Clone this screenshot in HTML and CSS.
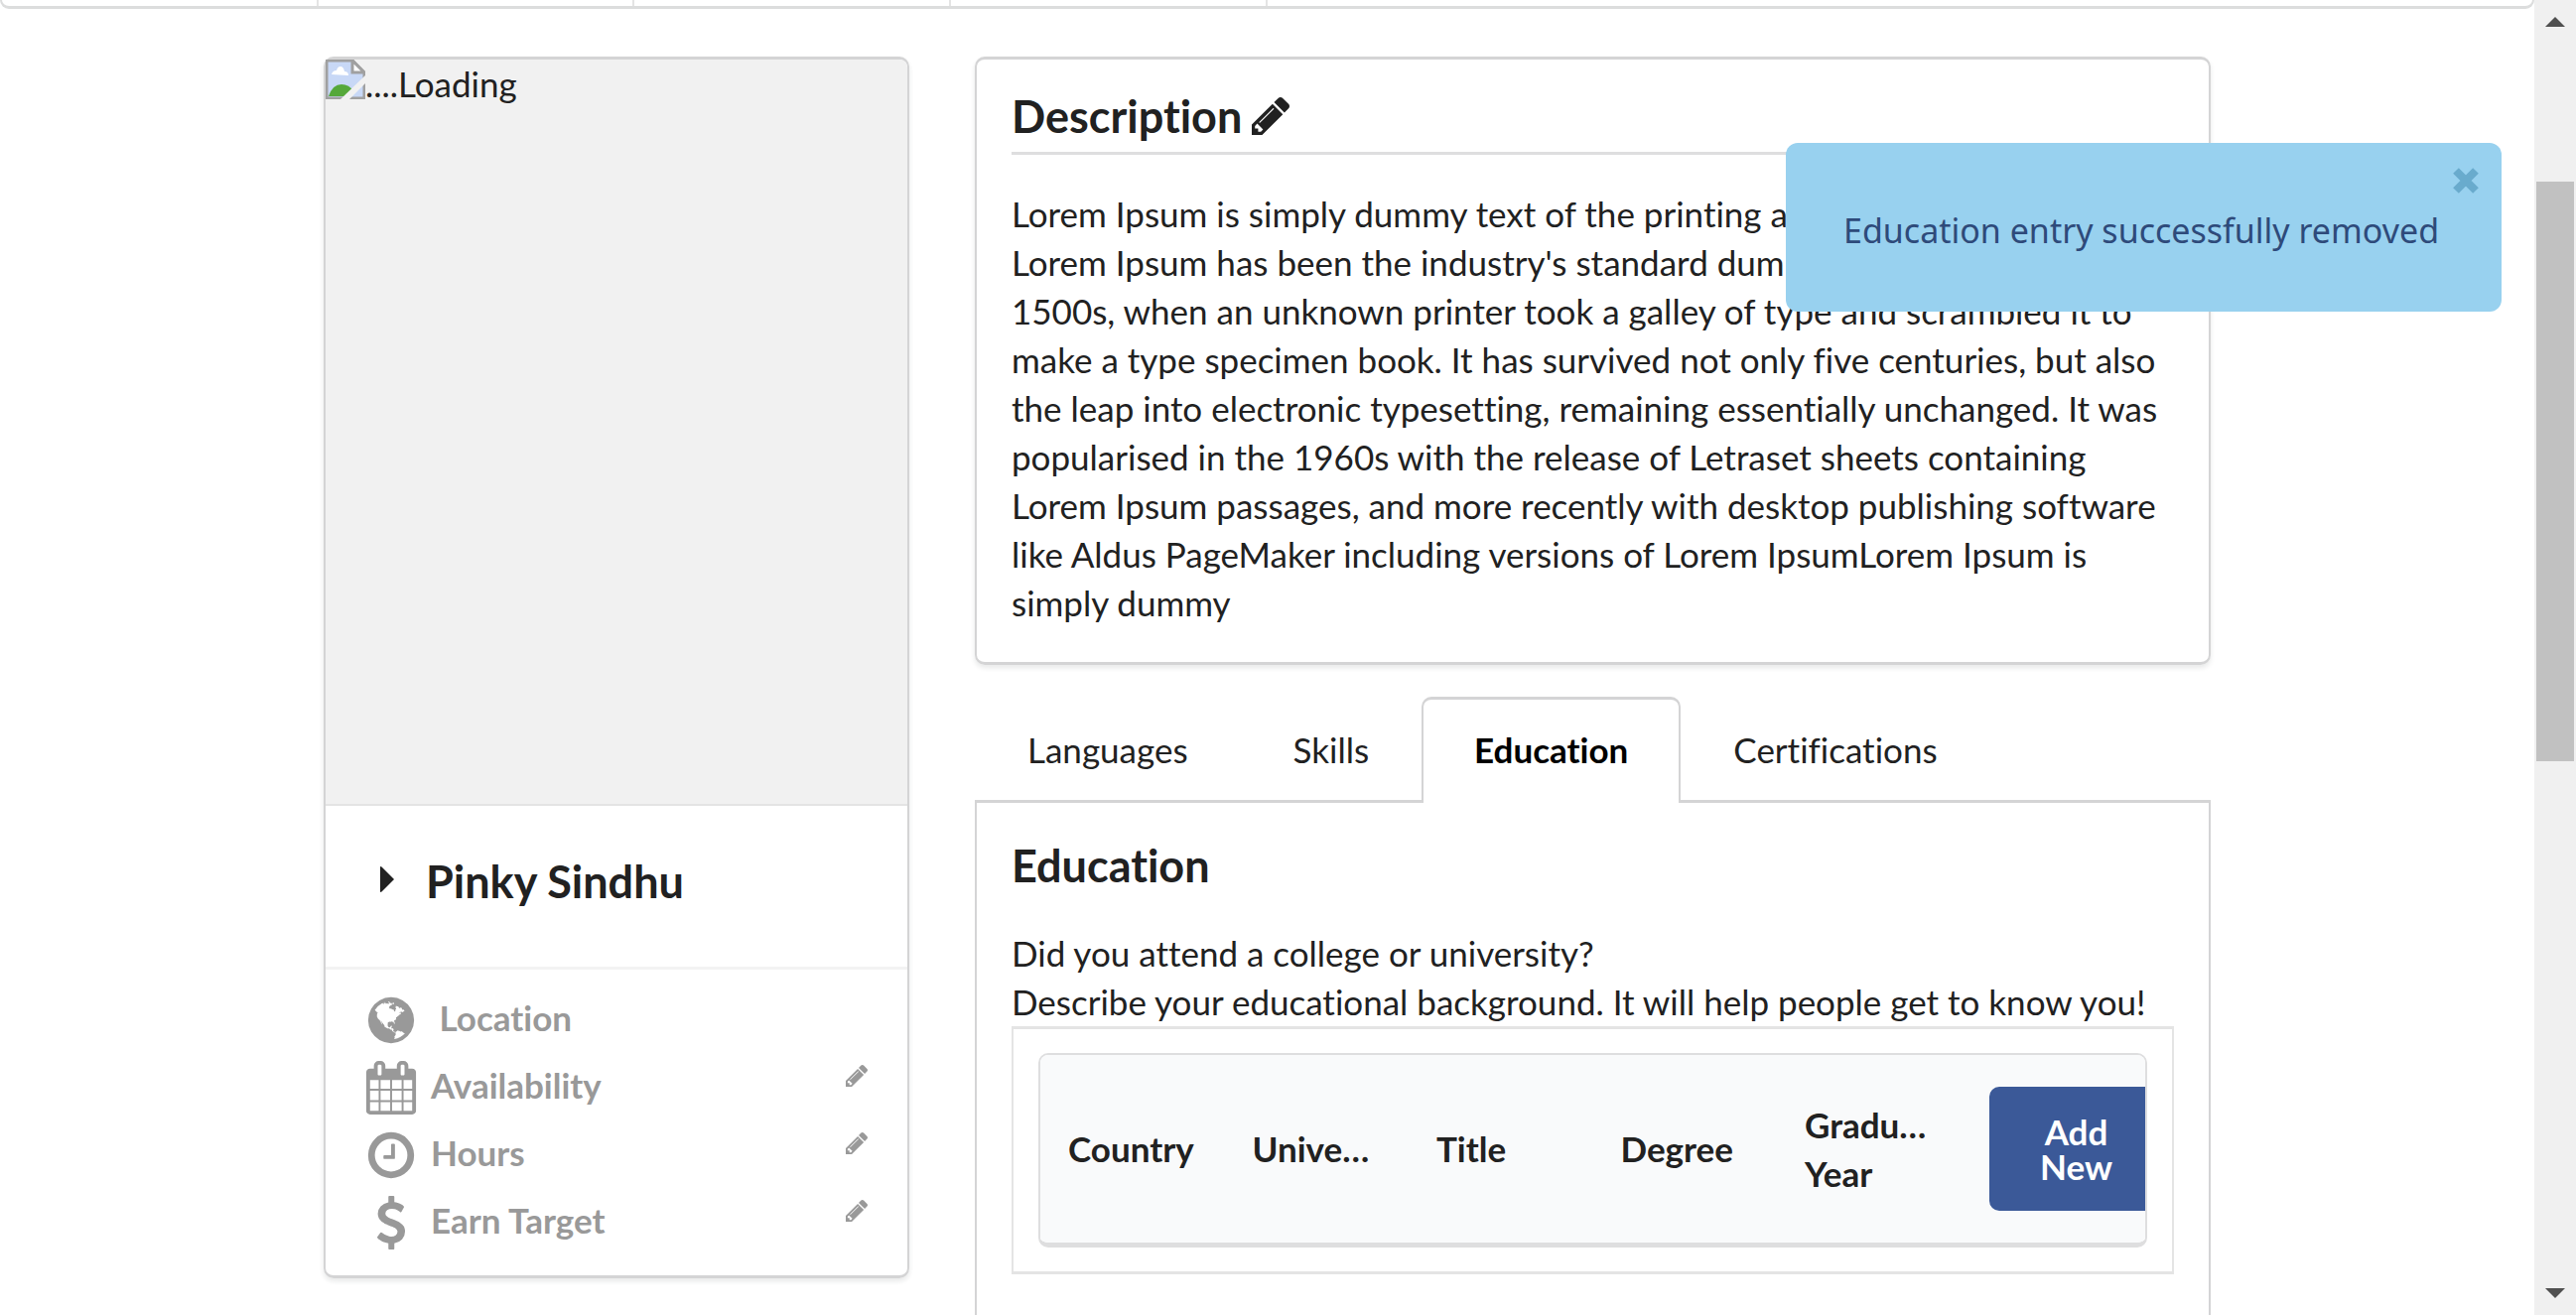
FILE: index.html
```html
<!DOCTYPE html>
<html lang="en">
<head>
<meta charset="utf-8">
<title>Profile</title>
<link rel="stylesheet" href="styles.css">
</head>
<body>
<svg class="defs" aria-hidden="true">
  <symbol id="pencil" viewBox="128 149 1515 1515"><path d="M491 1536l91-91-235-235-91 91v107h128v128h107zm523-928q0-22-22-22-10 0-17 7l-542 542q-7 7-7 17 0 22 22 22 10 0 17-7l542-542q7-7 7-17zm-54-192l416 416-832 832h-416v-416zm683 96q0 53-37 90l-166 166-416-416 166-165q36-38 90-38 53 0 91 38l235 234q37 39 37 91z"/></symbol>
</svg>
<div class="window">
  <div class="page">
    <nav class="topmenu" aria-label="Main"><span></span><span></span><span></span><span></span></nav>
    <main class="columns">
      <section class="card profile">
        <div class="photo">
          <svg class="broken" viewBox="0 0 40 40" aria-hidden="true">
            <path d="M1 1h26l12 12v26H1z" fill="#c8d8f6" stroke="#a0a0a0" stroke-width="3"/>
            <path d="M27 1v12h12z" fill="#fff" stroke="#a0a0a0" stroke-width="3"/>
            <path d="M6 15q1-4 5-4 1-4 4-4t4 5q4 0 4 4z" fill="#fff"/>
            <path d="M3 37q4-12 13-12 8 0 12 7l-6 5z" fill="#55a83a"/>
            <path d="M40 16v8L24 40h-9z" fill="#f1f1f1"/>
          </svg><span>....Loading</span>
        </div>
        <details class="name"><summary><svg class="caret" viewBox="0 0 14 26" aria-hidden="true"><path d="M0 1q0-2 2 0l12 12L2 25q-2 2-2 0z"/></svg>Pinky Sindhu</summary></details>
        <ul class="facts">
          <li>
            <svg viewBox="0 0 1792 1792" aria-hidden="true"><path transform="translate(128 0)" d="M768 128q209 0 385.5 103t279.5 279.5 103 385.5-103 385.5-279.5 279.5-385.5 103-385.5-103-279.5-279.5-103-385.5 103-385.5 279.5-279.5 385.5-103zm274 521q-2 1-9.5 9.5t-13.5 9.5q2 0 4.5-5t5-11 3.5-7q6-7 22-15 14-6 52-12 34-8 51 11-2-2 9.5-13t14.5-12q3-2 15-4.5t15-7.5l2-22q-12 1-17.5-7t-6.5-21q0 2-6 8 0-7-4.5-8t-11.5 1-9 1q-10-3-15-7.5t-8-16.5-4-15q-2-5-9.5-10.5t-9.5-10.5q-1-2-2.5-5.5t-3-6.5-4-5.5-5.5-2.5-7 5-7.5 10-4.5 5q-3-2-6-1.5t-4.5 1-4.5 3-5 3.5q-3 2-8.5 3t-8.5 2q15-5-1-11-10-4-16-3 9-4 7.5-12t-8.5-14h5q-1-4-8.5-8.5t-17.5-8.5-13-6q-8-5-34-9.5t-33-.5q-5 6-4.5 10.5t4 14 3.5 12.5q1 6-5.5 13t-6.5 12q0 7 14 15.5t10 21.5q-3 8-16 16t-16 12q-5 8-1.5 18.5t10.5 16.5q2 2 1.5 4t-3.5 4.5-5.5 4-6.5 3.5l-3 2q-11 5-20.5-6t-13.5-26q-7-25-16-30-23-8-29 1-5-13-41-26-25-9-58-4 6-1 0-15-7-15-19-12 3-6 4-17.5t1-13.5q3-13 12-23 1-1 7-8.5t9.5-13.5.5-6q35 4 50-11 5-5 11.5-17t10.5-17q9-6 14-5.5t14.5 5.5 14.5 5q14 1 15.5-11t-7.5-20q12 1 3-17-4-7-8-9-12-4-27 5-8 4 2 8-1-1-9.5 10.5t-16.5 17.5-16-5q-1-1-5.5-13.5t-9.5-13.5q-8 0-16 15 3-8-11-15t-24-8q19-12-8-27-7-4-20.5-5t-19.5 4q-5 7-5.5 11.5t5 8 10.5 5.5 11.5 4 8.5 3q14 10 8 14-2 1-8.5 3.5t-11.5 4.5-6 4q-3 4 0 14t-2 14q-5-5-9-17.5t-7-16.5q7 9-25 6l-10-1q-4 0-16 2t-20.5 1-13.5-8q-4-8 0-20 1-4 4-2-4-3-11-9.5t-10-8.5q-46 15-94 41 6 1 12-1 5-2 13-6.5t10-5.5q34-14 42-7l5-5q14 16 20 25-7-4-30-1-20 6-22 12 7 12 5 18-4-3-11.5-10t-14.5-11-15-5q-16 0-22 1-146 80-235 222 7 7 12 8 4 1 5 9t2.5 11 11.5-3q9 8 3 19 1-1 44 27 19 17 21 21 3 11-10 18-1-2-9-9t-9-4q-3 5 .5 18.5t10.5 12.5q-7 0-9.5 16t-2.5 35.5-1 23.5l2 1q-3 12 5.5 34.5t21.5 19.5q-13 3 20 43 6 8 8 9 3 2 12 7.5t15 10 10 10.5q4 5 10 22.5t14 23.5q-2 6 9.5 20t10.5 23q-1 0-2.5 1t-2.5 1q3 7 15.5 14t15.5 13q1 3 2 10t3 11 8 2q2-20-24-62-15-25-17-29-3-5-5.5-15.5t-4.5-14.5q2 0 6 1.5t8.5 3.5 7.5 4 2 3q-3 7 2 17.5t12 18.5 17 19 12 13q6 6 14 19.5t0 13.5q9 0 20 10.5t17 19.5q5 8 8 26t5 24q2 7 8.5 13.5t12.5 9.5l16 8 13 7q5 2 18.5 10.5t21.5 11.5q10 4 16 4t14.5-2.5 13.5-3.5q15-2 29 15t21 21q36 19 55 11-2 1 .5 7.5t8 15.5 9 14.5 5.5 8.5q5 6 18 15t18 15q6-4 7-9-3 8 7 20t18 10q14-3 14-32-31 15-49-18 0-1-2.5-5.5t-4-8.5-2.5-8.5 0-7.5 5-3q9 0 10-3.5t-2-12.5-4-13q-1-8-11-20t-12-15q-5 9-16 8t-16-9q0 1-1.5 5.5t-1.5 6.5q-13 0-15-1 1-3 2.5-17.5t3.5-22.5q1-4 5.5-12t7.5-14.5 4-12.5-4.5-9.5-17.5-2.5q-19 1-26 20-1 3-3 10.5t-5 11.5-9 7q-7 3-24 2t-24-5q-13-8-22.5-29t-9.5-37q0-10 2.5-26.5t3-25-5.5-24.5q3-2 9-9.5t10-10.5q2-1 4.5-1.5t4.5 0 4-1.5 3-6q-1-1-4-3-3-3-4-3 7 3 28.5-1.5t27.5 1.5q15 11 22-2 0-1-2.5-9.5t-.5-13.5q5 27 29 9 3 3 15.5 5t17.5 5q3 2 7 5.5t5.5 4.5 5-.5 8.5-6.5q10 14 12 24 11 40 19 44 7 3 11 2t4.5-9.5 0-14-1.5-12.5l-1-8v-18l-1-8q-15-3-18.5-12t1.5-18.5 15-18.5q1-1 8-3.5t15.5-6.5 12.5-8q21-19 15-35 7 0 11-9-1 0-5-3t-7.5-5-4.5-2q9-5 2-16 5-3 7.5-11t7.5-10q9 12 21 2 8-8 1-16 5-7 20.5-10.5t18.5-9.5q7 2 8-2t1-12 3-12q4-5 15-9t13-5l17-11q3-4 0-4 18 2 31-11 10-11-6-20 3-6-3-9.5t-15-5.5q3-1 11.5-.5t10.5-1.5q15-10-7-16-17-5-43 12zm-163 877q206-36 351-189-3-3-12.5-4.5t-12.5-3.5q-18-7-24-8 1-7-2.5-13t-8-9-12.5-8-11-7q-2-2-7-6t-7-5.5-7.5-4.5-8.5-2-10 1l-3 1q-3 1-5.5 2.5t-5.5 3-4 3 0 2.5q-21-17-36-22-5-1-11-5.5t-10.5-7-10-1.5-11.5 7q-5 5-6 15t-2 13q-7-5 0-17.5t2-18.5q-3-6-10.5-4.5t-12 4.5-11.5 8.5-9 6.5-8.5 5.5-8.5 7.5q-3 4-6 12t-5 11q-2-4-11.5-6.5t-9.5-5.5q2 10 4 35t5 38q7 31-12 48-27 25-29 40-4 22 12 26 0 7-8 20.5t-7 21.5q0 6 2 16z"/></svg>
            <span>&nbsp;Location</span>
          </li>
          <li>
            <svg viewBox="0 0 1792 1792" aria-hidden="true"><path d="M192 1664h288v-288h-288v288zm352 0h320v-288h-320v288zm-352-352h288v-320h-288v320zm352 0h320v-320h-320v320zm-352-384h288v-288h-288v288zm736 736h320v-288h-320v288zm-384-736h320v-288h-320v288zm768 736h288v-288h-288v288zm-384-352h320v-320h-320v320zm-352-864v-288q0-13-9.5-22.5t-22.5-9.5h-64q-13 0-22.5 9.5t-9.5 22.5v288q0 13 9.5 22.5t22.5 9.5h64q13 0 22.5-9.5t9.5-22.5zm736 864h288v-320h-288v320zm-384-384h320v-288h-320v288zm384 0h288v-288h-288v288zm32-480v-288q0-13-9.5-22.5t-22.5-9.5h-64q-13 0-22.5 9.5t-9.5 22.5v288q0 13 9.5 22.5t22.5 9.5h64q13 0 22.5-9.5t9.5-22.5zm384-64v1280q0 52-38 90t-90 38h-1408q-52 0-90-38t-38-90v-1280q0-52 38-90t90-38h128v-96q0-66 47-113t113-47h64q66 0 113 47t47 113v96h384v-96q0-66 47-113t113-47h64q66 0 113 47t47 113v96h128q52 0 90 38t38 90z"/></svg>
            <span>Availability</span>
            <button class="edit" aria-label="Edit availability"><svg><use href="#pencil"/></svg></button>
          </li>
          <li>
            <svg viewBox="0 0 1792 1792" aria-hidden="true"><circle cx="896" cy="896" r="656" fill="none" stroke="currentColor" stroke-width="224"/><path d="M1024 544v448q0 14-9 23t-23 9h-320q-14 0-23-9t-9-23v-64q0-14 9-23t23-9h224v-352q0-14 9-23t23-9h64q14 0 23 9t9 23z"/></svg>
            <span>Hours</span>
            <button class="edit" aria-label="Edit hours"><svg><use href="#pencil"/></svg></button>
          </li>
          <li>
            <svg viewBox="0 0 1792 1792" aria-hidden="true"><path d="M1362 1185q0 153-99.500 263.500t-258.500 136.500v175q0 14-9 23t-23 9h-135q-13 0-22.500-9.500t-9.500-22.500v-175q-66-9-127.500-31t-101.500-44.500-74-48-46.500-37.500-17.500-18q-17-21-2-41l103-135q7-10 23-12 15-2 24 9l2 2q113 99 243 125 37 8 74 8 81 0 142.500-43t61.500-122q0-28-15-53t-33.500-42-58.500-37.500-66-32-80-32.500q-39-16-61.500-25t-61.500-26.500-62.500-31-56.500-35.500-53.500-42.500-43.500-49-35.500-58-21-66.500-8.500-78q0-138 98-242t255-134v-180q0-13 9.500-22.500t22.500-9.500h135q14 0 23 9t9 23v176q57 6 110.500 23t87 33.500 63.500 37.500 39 29 15 14q17 18 5 38l-81 146q-8 15-23 16-14 3-27-7-3-3-14.500-12t-39-26.500-58.500-32-74.500-26-85.500-11.500q-95 0-155 43t-60 111q0 26 8.500 48t29.500 41.500 39.500 33 56 31 60.500 27 70 27.500q53 20 81 31.500t76 35 75.500 42.500 62 50 53 63.500 31.500 76.500 13 94z"/></svg>
            <span>Earn Target</span>
            <button class="edit" aria-label="Edit earn target"><svg><use href="#pencil"/></svg></button>
          </li>
        </ul>
      </section>
      <div class="content">
        <section class="card description">
          <h2>Description<button class="edit-title" aria-label="Edit description"><svg><use href="#pencil"/></svg></button></h2>
          <p>Lorem Ipsum is simply dummy text of the printing and typesetting industry. Lorem Ipsum has been the industry's standard dummy text ever since the 1500s, when an unknown printer took a galley of type and scrambled it to make a type specimen book. It has survived not only five centuries, but also the leap into electronic typesetting, remaining essentially unchanged. It was popularised in the 1960s with the release of Letraset sheets containing Lorem Ipsum passages, and more recently with desktop publishing software like Aldus PageMaker including versions of Lorem IpsumLorem Ipsum is simply dummy</p>
        </section>
        <nav class="tabs" aria-label="Profile sections">
          <a href="#languages">Languages</a>
          <a href="#skills">Skills</a>
          <a href="#education" class="active" aria-current="true">Education</a>
          <a href="#certifications">Certifications</a>
        </nav>
        <section class="panel" id="education">
          <h2>Education</h2>
          <p>Did you attend a college or university?<br>Describe your educational background. It will help people get to know you!</p>
          <div class="frame">
            <div class="tablewrap">
              <table>
                <thead><tr><th>Country</th><th>University</th><th>Title</th><th>Degree</th><th>Graduation Year</th><th class="action"><button class="add">Add New</button></th></tr></thead>
              </table>
            </div>
          </div>
        </section>
      </div>
    </main>
  </div>
  <div class="scrollbar" aria-hidden="true">
    <svg viewBox="0 0 20 10"><path d="M0 10L10 0l10 10z"/></svg>
    <div class="track"><div class="thumb"></div></div>
    <svg viewBox="0 0 20 10"><path d="M0 0h20L10 10z"/></svg>
  </div>
  <div class="toast" role="status">
    <span>Education entry successfully removed</span>
    <button class="close" aria-label="Close"><svg viewBox="0 0 28 28"><path d="M4 4l20 20M24 4L4 24" stroke="currentColor" stroke-width="8"/></svg></button>
  </div>
</div>
</body>
</html>
```
FILE: styles.css
```css
* { box-sizing: border-box; }
body {
  margin: 0;
  background: #fff;
  color: #212121;
  font: 35px/49px Lato, "Liberation Sans", sans-serif;
  font-variant-ligatures: no-common-ligatures;
}
button {
  padding: 0;
  border: 0;
  background: none;
  color: inherit;
  font: inherit;
  cursor: pointer;
}
svg { display: block; fill: currentColor; }
.defs { display: none; }
h2, p, ul { margin: 0; padding: 0; }
h2 { font-size: 45px; line-height: 56px; font-weight: 700; }

.window { position: relative; display: flex; height: 100vh; overflow: hidden; }
.page { flex: 1; min-width: 0; }

.topmenu {
  display: flex;
  height: 9px;
  border: solid #dcdddd;
  border-width: 0 2px 3px;
  border-radius: 0 0 10px 10px;
}
.topmenu span { flex: 0 0 12.5%; border-right: 2px solid #e4e4e4; }

.columns {
  display: grid;
  grid-template-columns: 590fr 1245fr;
  column-gap: 66px;
  align-items: start;
  width: 1901px;
  max-width: 100%;
  margin: 48px auto 0;
}
.card {
  border: solid #d4d4d5;
  border-width: 3px 2px;
  border-radius: 10px;
  box-shadow: 0 3px 5px rgba(34, 36, 38, .1);
}

.photo {
  display: flex;
  height: 752px;
  background: #f1f1f1;
  border-bottom: 2px solid #e4e4e4;
  border-radius: 8px 8px 0 0;
}
.broken { width: 40px; height: 40px; }
.name { padding: 44px 55px 54px; border-bottom: 3px solid #f3f3f3; }
.name summary {
  display: flex;
  align-items: center;
  gap: 32px;
  list-style: none;
  font-size: 45px;
  line-height: 64px;
  font-weight: 700;
}
.caret { width: 14px; height: 26px; margin-bottom: 4px; }
.facts { padding: 24px 38px 12px 39px; list-style: none; color: #999; font-weight: 700; }
.facts li { display: flex; height: 68px; gap: 13px; }
.facts li > svg { width: 54px; height: 54px; }
.edit { margin-left: auto; align-self: start; padding: 4px 2px; }
.edit svg { width: 22px; height: 22px; }

.content { min-width: 0; }
.description { padding: 29px 35px 35px; }
.description h2 {
  display: flex;
  align-items: center;
  gap: 10px;
  padding-bottom: 8px;
  border-bottom: 3px solid #dededf;
}
.edit-title svg { width: 38px; height: 38px; }
.description p { padding-top: 35px; }

.tabs { display: flex; margin-top: 32px; border-bottom: 3px solid #d4d4d5; }
.tabs a {
  padding: 26px 51px;
  border: solid transparent;
  border-width: 3px 2px 0;
  border-radius: 10px 10px 0 0;
  color: #212121;
  text-decoration: none;
}
.tabs .active {
  margin-bottom: -3px;
  border-color: #d4d4d5;
  background: #fff;
  color: #000;
  font-weight: 700;
}
.panel { padding: 35px 35px 70px; border: solid #d4d4d5; border-width: 0 2px 3px; }
.panel p { margin-top: 36px; }

.frame { padding: 24px 25px; border: solid #e4e4e4; border-width: 3px 2px; }
.tablewrap {
  overflow: hidden;
  border: 2px solid #dededf;
  border-bottom-width: 5px;
  border-radius: 10px;
}
table { width: 100%; table-layout: fixed; border-collapse: collapse; background: #f9fafb; }
th {
  height: 189px;
  padding: 0 28px;
  overflow: hidden;
  text-align: left;
  text-overflow: ellipsis;
}
th.action { overflow: visible; }
.add {
  width: 176px;
  height: 125px;
  padding: 0 40px;
  border-radius: 10px;
  background: #3b5998;
  color: #fff;
  font-weight: 700;
  line-height: 35px;
}

.scrollbar {
  display: flex;
  flex-direction: column;
  align-items: center;
  width: 42px;
  padding: 17px 0;
  background: #f0f0f0;
  color: #505050;
}
.scrollbar svg { width: 20px; height: 10px; }
.track { flex: 1; width: 38px; padding-top: 156px; }
.thumb { height: 584px; background: #c1c1c1; }

.toast {
  position: absolute;
  top: 144px;
  right: 75px;
  width: 721px;
  padding: 63px 58px 57px;
  border-radius: 12px;
  background: #98d1ef;
  color: #2e4a7a;
  font: 34px/50px "Noto Sans", sans-serif;
  white-space: nowrap;
}
.close { position: absolute; top: 24px; right: 22px; color: #69abcd; }
.close svg { width: 28px; height: 28px; }
```
